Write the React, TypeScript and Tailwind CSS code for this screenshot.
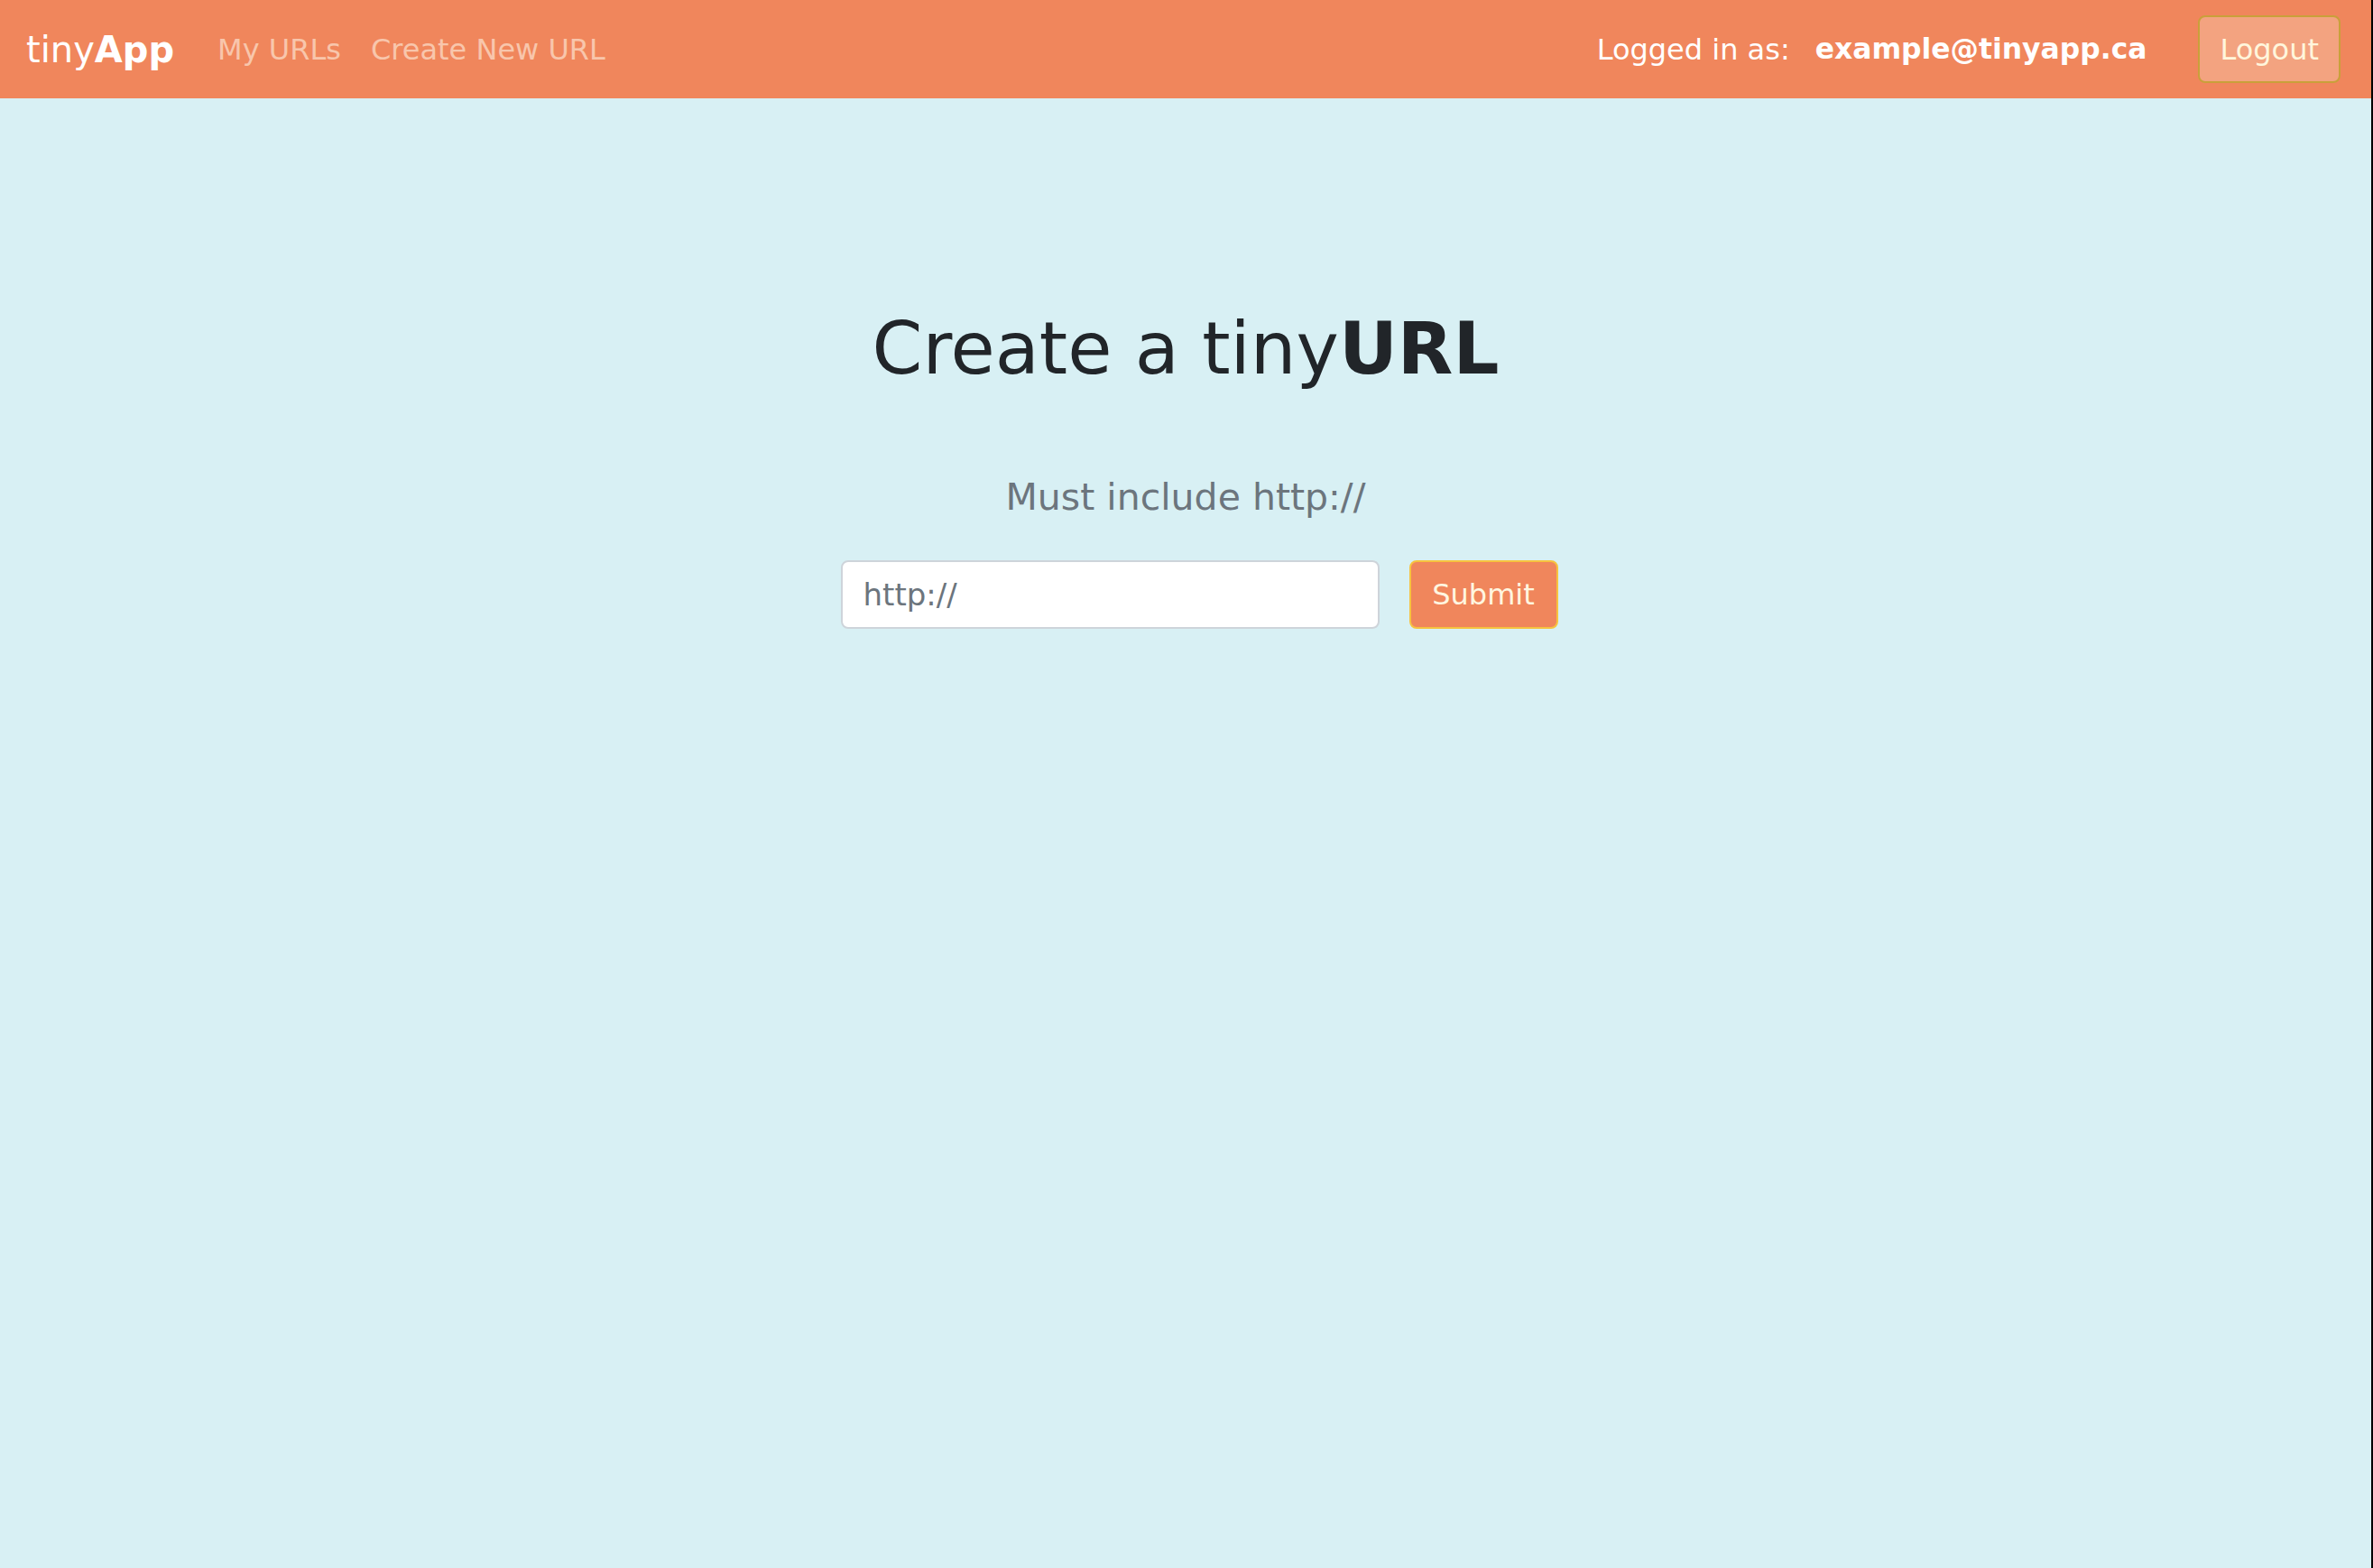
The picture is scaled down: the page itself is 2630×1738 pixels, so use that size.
import React from 'react';

export default function App() {
  return (
    <div className="flex h-screen w-full bg-[#D8F0F4] font-['DejaVu_Sans',sans-serif]">
      <div className="flex flex-1 flex-col">
        {/* Navbar */}
        <nav className="flex h-[109px] items-center bg-[#F0865C] pl-[29px] pr-[34px]">
          <a className="text-[40px] leading-none text-white">
            tiny<b className="font-bold">App</b>
          </a>
          <div className="ml-[48px] flex items-center gap-[33px] text-[32px] leading-none text-[#F8C6AC]">
            <a>My URLs</a>
            <a>Create New URL</a>
          </div>
          <div className="ml-auto flex items-center text-[32px] leading-none text-white">
            <span>Logged in as:</span>
            <b className="ml-[28px] text-[31.4px] font-bold">example@tinyapp.ca</b>
            <button className="ml-[57px] h-[75px] rounded-[8px] border-2 border-[#C9A03A] bg-[#F3A380] px-[22px] text-[32px] leading-none text-[#FFF6DC]">
              Logout
            </button>
          </div>
        </nav>

        {/* Main */}
        <main className="flex flex-col items-center">
          <h1 className="mt-[238px] text-[80px] leading-none text-[#212529]">
            Create a tiny<b className="font-bold">URL</b>
          </h1>
          <p className="mt-[104px] text-[41px] leading-none text-[#6C757D]">Must include http://</p>
          <form className="mt-[49px] flex items-center gap-[33px] pl-[30px]">
            <input
              type="text"
              placeholder="http://"
              className="h-[76px] w-[597px] rounded-[8px] border-2 border-[#CED4DA] bg-white px-[23px] text-[34px] text-[#495057] outline-none placeholder:text-[#6C757D]"
            />
            <button
              type="button"
              className="h-[76px] w-[165px] rounded-[8px] border-2 border-[#F7C33F] bg-[#F0865C] text-[32px] leading-none text-[#FFF6E0]"
            >
              Submit
            </button>
          </form>
        </main>
      </div>
      <div className="w-[2px] bg-black" />
    </div>
  );
}
